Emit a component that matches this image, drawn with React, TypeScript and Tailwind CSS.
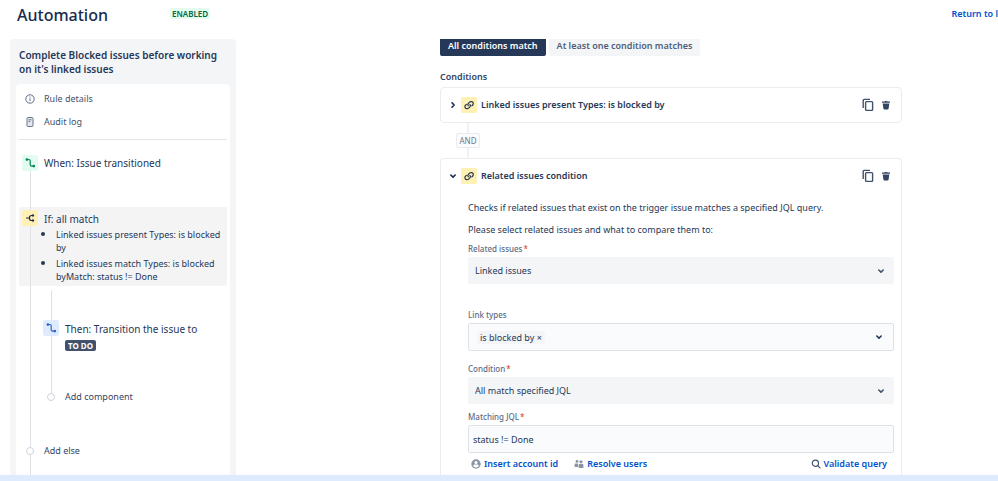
import React, { useState } from "react";
import clsx from "clsx";

const SELECT_OPTIONS = {
	related: ["Linked issues"],
	condition: ["All match specified JQL"],
};

const TransitionIcon = () => (
	<svg viewBox="0 0 16 16" className="size-4" fill="none" stroke="currentColor" strokeWidth="1.2">
		<path d="M5 4.500h1.800q1.400 0 1.400 1.400v3.800q0 1.400 1.400 1.400h2" />
		<circle cx="4.900" cy="4.600" r="1.300" fill="currentColor" stroke="none" />
		<circle cx="11.800" cy="11.100" r="1.300" fill="currentColor" stroke="none" />
	</svg>
);

const BranchIcon = () => (
	<svg viewBox="0 0 16 16" className="size-4" fill="none" stroke="currentColor" strokeWidth="1.2">
		<path d="M4 8h3.200M11.500 5.500H9.600Q7.400 5.500 7.400 8t2.200 2.500h1.900" />
		<path d="M10.700 4.100l1.500 1.400-1.500 1.400zM10.700 9.100l1.500 1.400-1.500 1.400z" fill="currentColor" strokeWidth="0.4" />
	</svg>
);

const LinkIcon = () => (
	<svg viewBox="0 0 16 16" className="size-4" fill="none" stroke="currentColor" strokeWidth="1.1" strokeLinecap="round">
		<path d="M7.300 8.900a1.900 1.900 0 0 1 0-2.500l1.300-1.300q.7-.6 1.600-.6 2.100.1 2.100 2.100 0 .8-.6 1.400l-.9.900" />
		<path d="M8.900 7.300a1.900 1.900 0 0 1 0 2.500l-1.300 1.300q-.7.6-1.600.6-2.100-.1-2.100-2.100 0-.8.6-1.400l.9-.9" />
	</svg>
);

const InfoIcon = () => (
	<svg viewBox="0 0 12 12" className="size-3" fill="none" stroke="#5e6c84">
		<circle cx="6" cy="6" r="4.200" />
		<path d="M6 5.400v2.800M6 3.500v1" />
	</svg>
);

const LogIcon = () => (
	<svg viewBox="0 0 12 12" className="size-3" fill="none" stroke="#6b778c">
		<rect x="3" y="1.500" width="6" height="9" rx="1" fill="#e4e7ee" />
		<path d="M4.500 3.800h3M4.500 5.600h1.800" />
	</svg>
);

const CopyIcon = () => (
	<svg viewBox="0 0 14 14" className="size-3.5" fill="none" stroke="currentColor" strokeWidth="1.4">
		<path d="M2.200 10V2.400q0-1 1-1H9" />
		<rect x="4.600" y="3.600" width="7" height="8.800" rx="0.8" />
	</svg>
);

const TrashIcon = () => (
	<svg viewBox="0 0 10 10" className="size-2.5" fill="currentColor">
		<path d="M1 1.600h2.600L4 1h2l.4.600H9v1.200H1zM1.700 3.400h6.600l-.7 5q-.1 1-1 1H3.400q-.9 0-1-1z" />
	</svg>
);

const Chevron = ({ open = true }: { open?: boolean }) => (
	<svg viewBox="0 0 8 8" className={clsx("size-2 shrink-0", !open && "-rotate-90")} fill="none" stroke="currentColor" strokeWidth="1.6" strokeLinecap="round" strokeLinejoin="round">
		<path d="M1.800 3l2.200 2.100L6.200 3" />
	</svg>
);

const PersonIcon = () => (
	<svg viewBox="0 0 10 10" className="size-2.5">
		<circle cx="5" cy="5" r="4.700" fill="#8993a4" />
		<circle cx="5" cy="3.500" r="1.500" fill="#fff" />
		<path d="M2.400 7.400V6.600q0-1 1-1h3.200q1 0 1 1v.8Q6.600 8.500 5 8.500T2.400 7.400z" fill="#fff" />
	</svg>
);

const PeopleIcon = () => (
	<svg viewBox="0 0 10 10" className="size-2.5" fill="#8993a4">
		<circle cx="3" cy="2.400" r="1.400" />
		<circle cx="7" cy="2.800" r="1.600" />
		<path d="M.6 8V5.400q0-1 1-1h2.400V8zM4.600 9V6q0-1 1-1h2.800q1 0 1 1v3z" />
	</svg>
);

const SearchIcon = () => (
	<svg viewBox="0 0 10 10" className="size-2.5" fill="none" stroke="#42526e" strokeWidth="1.2" strokeLinecap="round">
		<circle cx="4.400" cy="4.200" r="3.100" />
		<path d="M6.800 6.600L9 8.800" />
	</svg>
);

const Rail = ({ className }: { className?: string }) => (
	<div className={clsx("w-px bg-[#dfe1e6]", className)} />
);

const Dot = () => (
	<div className="size-2 shrink-0 rounded-full border border-[#cfd3db] bg-white" />
);

const FieldLabel = ({ htmlFor, required, children }: { htmlFor: string; required?: boolean; children: React.ReactNode }) => (
	<label htmlFor={htmlFor} className="block text-[8px] leading-3 font-medium text-[#5e6c84]">
		{children}
		{required && <span className="ml-px font-normal text-[#de350b]">*</span>}
	</label>
);

const SelectField = ({ id, options }: { id: string; options: string[] }) => (
	<div className="mt-0.5 grid items-center">
		<select
			id={id}
			className="col-start-1 row-start-1 h-[27px] w-full appearance-none rounded-[2px] bg-[#f4f5f7] px-[7px] text-[9px] text-[#253858]"
		>
			{options.map(option => (
				<option key={option}>{option}</option>
			))}
		</select>
		<span className="pointer-events-none col-start-1 row-start-1 mr-[9px] justify-self-end text-[#42526e]">
			<Chevron />
		</span>
	</div>
);

const ConditionHeader = ({ title, open }: { title: string; open: boolean }) => (
	<div className="flex h-[34px] items-center pr-2.5 pl-2">
		<button type="button" aria-label="Toggle condition" className="text-[#172b4d]">
			<Chevron open={open} />
		</button>
		<span className="ml-1 rounded-[2px] bg-[#fff0b3] text-[#172b4d]">
			<LinkIcon />
		</span>
		<h3 className="ml-1 flex-1 text-[9px] font-semibold text-[#253858]">{title}</h3>
		<button type="button" aria-label="Duplicate" className="text-[#42526e]">
			<CopyIcon />
		</button>
		<button type="button" aria-label="Delete" className="ml-1.5 text-[#344563]">
			<TrashIcon />
		</button>
	</div>
);

const Sidebar = () => (
	<aside className="ml-2.5 flex w-[226px] shrink-0 flex-col rounded-t-[4px] bg-[#f4f5f7] px-1.5 pt-[9px]">
		<h2 className="px-[3px] text-[10px] leading-3.5 font-semibold text-[#253858]">
			Complete Blocked issues before working on it's linked issues
		</h2>
		<div className="mt-2 flex flex-1 flex-col rounded-t-[4px] bg-white px-[3px] pt-[3px]">
			<nav className="border-b border-[#e4e6ea] pb-1.5 text-[9px] text-[#42526e]">
				<a href="#details" className="flex h-[23px] items-center gap-2 pl-[5px]">
					<InfoIcon />
					Rule details
				</a>
				<a href="#audit" className="flex h-[23px] items-center gap-2 pl-[5px]">
					<LogIcon />
					Audit log
				</a>
			</nav>

			<div className="mt-[15px] flex h-[52px] gap-1.5 pl-[3px]">
				<div className="flex w-4 flex-col items-center">
					<span className="rounded-[2px] bg-[#e3fcef] text-[#00875a]">
						<TransitionIcon />
					</span>
					<Rail className="flex-1" />
				</div>
				<p className="text-[10px] leading-[17px] text-[#253858]">When: Issue transitioned</p>
			</div>

			<div className="flex gap-1.5 rounded-[2px] bg-[#f4f4f5] pl-[3px]">
				<div className="flex w-4 flex-col items-center">
					<Rail className="h-[3px]" />
					<span className="rounded-[2px] bg-[#fff0b3] text-[#172b4d]">
						<BranchIcon />
					</span>
					<Rail className="flex-1" />
				</div>
				<div className="flex-1 pt-1 pb-[3px] text-[#253858]">
					<p className="text-[10px] leading-[17px]">If: all match</p>
					<ul className="-mt-0.5 list-disc space-y-px pl-3 text-[9px] leading-[13px] marker:text-xs">
						<li>Linked issues present Types: is blocked by</li>
						<li>Linked issues match Types: is blocked byMatch: status != Done</li>
					</ul>
				</div>
			</div>

			<div className="flex gap-[5px] pl-[3px]">
				<div className="flex w-4 flex-col items-center">
					<Rail className="flex-1" />
				</div>
				<div className="flex-1 pt-1">
					<div className="flex h-[103px] gap-1.5">
						<div className="flex w-4 flex-col items-center">
							<Rail className="h-[30px]" />
							<span className="rounded-[2px] bg-[#deebff] text-[#2a62c9]">
								<TransitionIcon />
							</span>
							<Rail className="flex-1" />
						</div>
						<div className="flex flex-col items-start pt-[31px]">
							<p className="text-[10px] leading-[17px] text-[#253858]">Then: Transition the issue to</p>
							<span className="mt-0.5 rounded-[2px] bg-[#42526e] px-[3px] text-[8px] leading-[11px] font-bold text-white">
								TO DO
							</span>
						</div>
					</div>
					<div className="flex h-[54px] gap-1.5">
						<div className="flex w-4 flex-col items-center">
							<Dot />
						</div>
						<button type="button" className="h-2 text-[9px] leading-2 text-[#344563]">Add component</button>
					</div>
				</div>
			</div>

			<div className="flex flex-1 gap-1.5 pl-[3px]">
				<div className="flex w-4 flex-col items-center">
					<Dot />
					<Rail className="flex-1" />
				</div>
				<button type="button" className="h-2 text-[9px] leading-2 text-[#344563]">Add else</button>
			</div>
		</div>
	</aside>
);

const App: React.FC = () => {
	const [jql, setJql] = useState<string>("status != Done");

	return (
		<div className="flex h-screen flex-col overflow-hidden bg-white font-['Noto_Sans','Open_Sans',sans-serif]">
			<header className="flex h-[39px] shrink-0 items-start pt-1 pl-[17px]">
				<h1 className="text-[16px] leading-[22px] font-medium text-[#172b4d]">Automation</h1>
				<span className="mt-1 ml-[62px] rounded-[2px] bg-[#e3fcef] px-0.5 text-[8px] leading-[11px] font-semibold text-[#006644]">
					ENABLED
				</span>
				<a href="#list" className="mt-1 ml-auto text-[9px] leading-3 font-semibold whitespace-nowrap text-[#0052cc]">
					Return to l
				</a>
			</header>

			<div className="flex min-h-0 flex-1">
				<Sidebar />
				<main className="min-w-0 flex-1 overflow-hidden pr-24 pl-[204px]">
					<div className="flex gap-[3px] text-[9px] font-semibold">
						<button type="button" className="h-[17px] rounded-b-[2px] bg-[#253858] px-2 pb-[3px] leading-3.5 text-white">
							All conditions match
						</button>
						<button type="button" className="h-[17px] rounded-b-[2px] bg-[#f4f5f7] px-2 pb-[3px] leading-3.5 text-[#505f79]">
							At least one condition matches
						</button>
					</div>

					<h2 className="mt-3.5 text-[9px] leading-3.5 font-semibold text-[#344563]">Conditions</h2>

					<section className="mt-[3px] rounded-[4px] border border-[#ebecf0]">
						<ConditionHeader title="Linked issues present Types: is blocked by" open={false} />
					</section>

					<div className="ml-4 flex w-6 flex-col items-center">
						<div className="h-2.5 w-0.5 bg-[#f0f1f4]" />
						<span className="rounded-[2px] border border-[#ebecf0] bg-[#fafbfc] px-0.5 text-[8px] leading-[13px] text-[#6b778c]">
							AND
						</span>
						<div className="h-2.5 w-0.5 bg-[#f0f1f4]" />
					</div>

					<section className="rounded-t-[4px] border border-b-0 border-[#ebecf0]">
						<ConditionHeader title="Related issues condition" open />
						<div className="pt-2 pr-[7px] pb-8 pl-[27px] text-[9px] text-[#253858]">
							<p className="leading-3.5">
								Checks if related issues that exist on the trigger issue matches a specified JQL query.
							</p>
							<p className="mt-2 mb-1.5 leading-3.5">
								Please select related issues and what to compare them to:
							</p>

							<FieldLabel htmlFor="related" required>Related issues</FieldLabel>
							<SelectField id="related" options={SELECT_OPTIONS.related} />

							<div className="mt-[25px] mb-3">
								<FieldLabel htmlFor="link-types">Link types</FieldLabel>
								<div className="mt-0.5 flex h-7 items-center justify-between rounded-[2px] border border-[#dfe1e6] bg-[#fafbfc] pr-2.5 pl-2">
									<button id="link-types" type="button" className="rounded-[2px] bg-[#f4f5f7] px-[3px] leading-[13px]">
										is blocked by ×
									</button>
									<Chevron />
								</div>
							</div>

							<FieldLabel htmlFor="condition" required>Condition</FieldLabel>
							<SelectField id="condition" options={SELECT_OPTIONS.condition} />

							<div className="mt-[7px]">
								<FieldLabel htmlFor="jql" required>Matching JQL</FieldLabel>
								<input
									id="jql"
									type="text"
									value={jql}
									onChange={e => setJql(e.target.value)}
									className="mt-0.5 h-7 w-full rounded-[2px] border border-[#dfe1e6] bg-[#fafbfc] px-1"
								/>
							</div>

							<div className="mt-1 flex items-center gap-4 px-[3px] leading-3.5 font-semibold text-[#0052cc]">
								<button type="button" className="flex items-center gap-[3px]">
									<PersonIcon />
									Insert account id
								</button>
								<button type="button" className="flex items-center gap-[3px]">
									<PeopleIcon />
									Resolve users
								</button>
								<button type="button" className="mr-1 ml-auto flex items-center gap-[3px]">
									<SearchIcon />
									Validate query
								</button>
							</div>
						</div>
					</section>
				</main>
			</div>

			<footer className="h-1.5 shrink-0 bg-[#deebff]" />
		</div>
	);
};

export default App;
